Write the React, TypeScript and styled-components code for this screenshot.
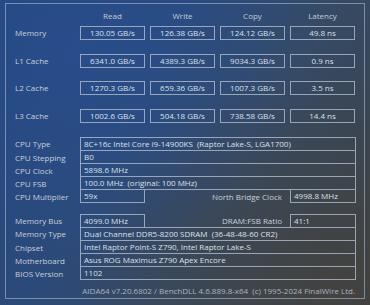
import React from "react";
import styled, { createGlobalStyle } from "styled-components";

const Global = createGlobalStyle`
  html, body { margin: 0; padding: 0; }
  body { font-family: "Open Sans", "Noto Sans", sans-serif; }
`;

const Page = styled.div`
  width: 370px;
  height: 305px;
  box-sizing: border-box;
  padding: 3px 5px 0 5px;
  background:
    radial-gradient(ellipse at 20% 15%, rgba(40, 80, 150, 0.55), transparent 60%),
    radial-gradient(ellipse at 90% 95%, rgba(70, 66, 58, 0.7), transparent 55%),
    linear-gradient(120deg, #25477d 0%, #2b4a7a 35%, #364a64 62%, #3b4248 100%);
  font-size: 8px;
  color: #ccd3de;
  overflow: hidden;
`;

const Frame = styled.div`
  width: 360px;
  height: 296px;
  box-sizing: border-box;
  border: 1px solid rgba(150, 165, 190, 0.75);
  padding: 6px 0 1px 9px;
  display: flex;
  flex-direction: column;
`;

const BenchRow = styled.div<{ $top?: number }>`
  display: flex;
  align-items: center;
  margin-top: ${(p) => p.$top ?? 0}px;
`;

const Label = styled.div`
  width: 65px;
  flex: none;
  line-height: 12px;
  white-space: nowrap;
  color: #c8d0dc;
`;

const Cols = styled.div`
  display: grid;
  grid-template-columns: repeat(4, 65px);
  column-gap: 5px;
`;

const Head = styled.div`
  text-align: center;
  line-height: 12px;
  color: #c4ccd8;
`;

const Cell = styled.div`
  height: 14px;
  box-sizing: border-box;
  border: 1px solid rgba(170, 182, 200, 0.85);
  text-align: center;
  line-height: 12px;
  color: #dbe0e8;
  white-space: nowrap;
`;

const Block = styled.div<{ $top: number }>`
  display: flex;
  flex-direction: column;
  margin-top: ${(p) => p.$top}px;
`;

const InfoRow = styled.div`
  display: flex;
  align-items: center;
`;

const Value = styled.div<{ $first?: boolean }>`
  width: 276px;
  height: ${(p) => (p.$first ? 14 : 13)}px;
  box-sizing: border-box;
  border: 1px solid rgba(170, 182, 200, 0.85);
  border-top-width: ${(p) => (p.$first ? 1 : 0)}px;
  padding-left: 3px;
  line-height: 12px;
  color: #dbe0e8;
  white-space: pre;
  overflow: hidden;
`;

const SplitValue = styled.div`
  width: 276px;
  height: 13px;
  display: flex;
  align-items: stretch;
`;

const Small = styled.div<{ $w: number; $topBorder?: boolean }>`
  width: ${(p) => p.$w}px;
  height: 13px;
  box-sizing: border-box;
  border: 1px solid rgba(170, 182, 200, 0.85);
  border-top-width: ${(p) => (p.$topBorder ? 1 : 0)}px;
  border-bottom-width: ${(p) => (p.$topBorder ? 0 : 1)}px;
  padding-left: 3px;
  line-height: 12px;
  color: #dbe0e8;
  white-space: nowrap;
`;

const SideLabel = styled.div`
  flex: 1;
  text-align: right;
  padding-right: 8px;
  line-height: 13px;
  color: #c8d0dc;
  white-space: nowrap;
`;

const Footer = styled.div`
  margin-top: 5px;
  width: 340px;
  text-align: right;
  line-height: 12px;
  color: #aab3c0;
  white-space: pre;
`;

const bench = [
  { name: "Memory", v: ["130.05 GB/s", "126.38 GB/s", "124.12 GB/s", "49.8 ns"] },
  { name: "L1 Cache", v: ["6341.0 GB/s", "4389.3 GB/s", "9034.3 GB/s", "0.9 ns"] },
  { name: "L2 Cache", v: ["1270.3 GB/s", "659.36 GB/s", "1007.3 GB/s", "3.5 ns"] },
  { name: "L3 Cache", v: ["1002.6 GB/s", "504.18 GB/s", "738.58 GB/s", "14.4 ns"] },
];

const cpu = [
  ["CPU Type", "8C+16c Intel Core i9-14900KS  (Raptor Lake-S, LGA1700)"],
  ["CPU Stepping", "B0"],
  ["CPU Clock", "5898.6 MHz"],
  ["CPU FSB", "100.0 MHz  (original: 100 MHz)"],
];

const mem = [
  ["Memory Type", "Dual Channel DDR5-8200 SDRAM  (36-48-48-60 CR2)"],
  ["Chipset", "Intel Raptor Point-S Z790, Intel Raptor Lake-S"],
  ["Motherboard", "Asus ROG Maximus Z790 Apex Encore"],
  ["BIOS Version", "1102"],
];

export default function App() {
  return (
    <Page>
      <Global />
      <Frame>
        <BenchRow>
          <Label />
          <Cols>
            <Head>Read</Head>
            <Head>Write</Head>
            <Head>Copy</Head>
            <Head>Latency</Head>
          </Cols>
        </BenchRow>
        {bench.map((r, i) => (
          <BenchRow key={r.name} $top={i === 0 ? 4 : 13.5}>
            <Label>{r.name}</Label>
            <Cols>
              {r.v.map((x) => (
                <Cell key={x}>{x}</Cell>
              ))}
            </Cols>
          </BenchRow>
        ))}

        <Block $top={14.5}>
          {cpu.map(([k, v], i) => (
            <InfoRow key={k}>
              <Label>{k}</Label>
              <Value $first={i === 0}>{v}</Value>
            </InfoRow>
          ))}
          <InfoRow>
            <Label>CPU Multiplier</Label>
            <SplitValue>
              <Small $w={65}>59x</Small>
              <SideLabel>North Bridge Clock</SideLabel>
              <Small $w={66}>4998.8 MHz</Small>
            </SplitValue>
          </InfoRow>
        </Block>

        <Block $top={11}>
          <InfoRow>
            <Label>Memory Bus</Label>
            <SplitValue>
              <Small $w={65} $topBorder>4099.0 MHz</Small>
              <SideLabel>DRAM:FSB Ratio</SideLabel>
              <Small $w={66} $topBorder>41:1</Small>
            </SplitValue>
          </InfoRow>
          {mem.map(([k, v], i) => (
            <InfoRow key={k}>
              <Label>{k}</Label>
              <Value $first={i === 0}>{v}</Value>
            </InfoRow>
          ))}
        </Block>

        <Footer>AIDA64 v7.20.6802 / BenchDLL 4.6.889.8-x64  (c) 1995-2024 FinalWire Ltd.</Footer>
      </Frame>
    </Page>
  );
}
